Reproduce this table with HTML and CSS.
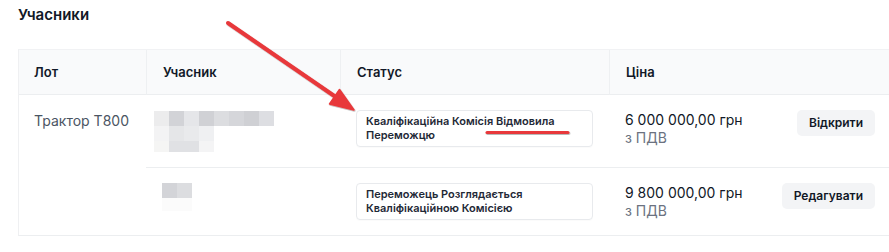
FILE: index.html
```html
<!DOCTYPE html>
<html lang="uk">
<head>
<meta charset="utf-8">
<link rel="stylesheet" href="styles.css">
</head>
<body>
<div class="page">
  <h2 class="title">Учасники</h2>
  <div class="table">
    <div class="th th-lot">Лот</div>
    <div class="th">Учасник</div>
    <div class="th">Статус</div>
    <div class="th th-price">Ціна</div>

    <div class="td td-lot">Трактор Т800</div>

    <div class="td td-part row1">
      <div class="blur blur-a">
        <div class="bl-row">
          <i style="background:#ececed"></i><i style="background:#d2d3d7"></i><i style="background:#e5e6e9"></i><i style="background:#d0d1d5"></i><i style="background:#dcdde0"></i><i style="background:#d5d6da"></i><i style="background:#cfd0d4"></i><i style="background:#dddee2"></i>
        </div>
        <div class="bl-row">
          <i style="background:#f3f3f4"></i><i style="background:#e5e6e8"></i><i style="background:#e9eaec"></i><i style="background:#eff0f2"></i>
        </div>
        <div class="bl-row bl-short">
          <i style="background:#f5f5f4"></i><i style="background:#e0e1e4"></i><i style="background:#e0e1e4"></i><i style="background:#f4f4f5"></i>
        </div>
      </div>
    </div>
    <div class="td row1">
      <div class="status">Кваліфікаційна Комісія Відмовила Переможцю</div>
    </div>
    <div class="td row1">
      <div class="price">6 000 000,00 грн</div>
      <div class="vat">з ПДВ</div>
    </div>
    <div class="td td-act row1">
      <button class="btn">Відкрити</button>
    </div>

    <div class="td td-part">
      <div class="blur blur-b">
        <div class="bl-row">
          <i style="background:#d3d4d8"></i><i style="background:#dcdde0"></i>
        </div>
        <div class="bl-row bl-faint">
          <i style="background:#fbfbfb"></i><i style="background:#fbfbfb"></i>
        </div>
      </div>
    </div>
    <div class="td">
      <div class="status">Переможець Розглядається Кваліфікаційною Комісією</div>
    </div>
    <div class="td">
      <div class="price">9 800 000,00 грн</div>
      <div class="vat">з ПДВ</div>
    </div>
    <div class="td td-act">
      <button class="btn">Редагувати</button>
    </div>
  </div>

  <svg class="annot" width="889" height="252" viewBox="0 0 889 252" aria-hidden="true">
    <defs>
      <filter id="sh" x="-20%" y="-20%" width="140%" height="140%">
        <feDropShadow dx="0.6" dy="0.8" stdDeviation="0.6" flood-color="#000" flood-opacity="0.35"/>
      </filter>
    </defs>
    <g filter="url(#sh)" fill="#e8393b" stroke="#e8393b">
      <line x1="228" y1="23" x2="338" y2="98.5" stroke-width="4" stroke-linecap="round"/>
      <polygon points="354,110 329.5,104 339.5,89.5" stroke-width="1.5" stroke-linejoin="round"/>
      <line x1="487" y1="132.5" x2="568" y2="132.5" stroke-width="3" stroke-linecap="round"/>
    </g>
  </svg>
</div>
</body>
</html>
```

FILE: styles.css
```css
* { box-sizing: border-box; }
html, body { margin: 0; padding: 0; background: #fff; overflow: hidden; }
body {
  font-family: Inter, "Noto Sans", "DejaVu Sans", sans-serif;
  color: #111827;
}
.page {
  position: relative;
  width: 889px;
  height: 252px;
  padding: 3px 0 0 18px;
}
.title {
  margin: 0 0 22px;
  font-size: 15px;
  line-height: 24px;
  font-weight: 600;
  color: #111827;
}
.table {
  width: 872px;
  display: grid;
  grid-template-columns: 127px 194px 269px 1fr auto;
  grid-template-rows: 45px auto auto;
  border-left: 1px solid #eff0f2;
  border-top: 1px solid #f1f2f4;
  border-bottom: 1px solid #eceef0;
}
.th {
  background: #f9fafb;
  border-bottom: 1px solid #eceef0;
  border-left: 1px solid #eef0f2;
  display: flex;
  align-items: center;
  padding: 0 16px;
  font-size: 13px;
  font-weight: 600;
  color: #111827;
}
.th-lot { border-left: 0; padding-left: 15px; }
.th-price { grid-column: span 2; }
.td {
  padding: 15px 16px 15px;
}
.row1 { border-bottom: 1px solid #eceef0; }
.td-lot {
  grid-row: span 2;
  padding-top: 16px;
  padding-left: 15px;
  font-size: 14px;
  line-height: 20px;
  color: #4b5563;
}
.td-part { padding-left: 8px; }
.row1.td-part { padding-top: 16px; }
.blur { display: flex; flex-direction: column; }
.bl-row { display: flex; }
.bl-row i { display: block; width: 15px; height: 15px; }
.bl-short i { height: 11px; }
.blur-b { margin-left: 8px; }
.bl-faint i { height: 13px; }
.status {
  border: 1px solid #e8eaed;
  border-radius: 4px;
  padding: 4px 9px 4px;
  font-size: 11px;
  line-height: 13.5px;
  font-weight: 600;
  color: #1f2937;
  box-shadow: 0 1px 1px rgba(0,0,0,0.02);
}
.price {
  font-size: 14px;
  line-height: 20px;
  color: #111827;
}
.vat {
  font-size: 14px;
  line-height: 16px;
  color: #6b7280;
}
.td-act {
  display: flex;
  justify-content: flex-end;
  align-items: flex-start;
  padding-right: 15px;
}
.btn {
  font-family: inherit;
  border: 0;
  background: #f3f4f6;
  border-radius: 5px;
  padding: 5px 12px;
  font-size: 12px;
  line-height: 16px;
  font-weight: 600;
  color: #111827;
}
.annot {
  position: absolute;
  left: 0;
  top: 0;
  pointer-events: none;
}
```
